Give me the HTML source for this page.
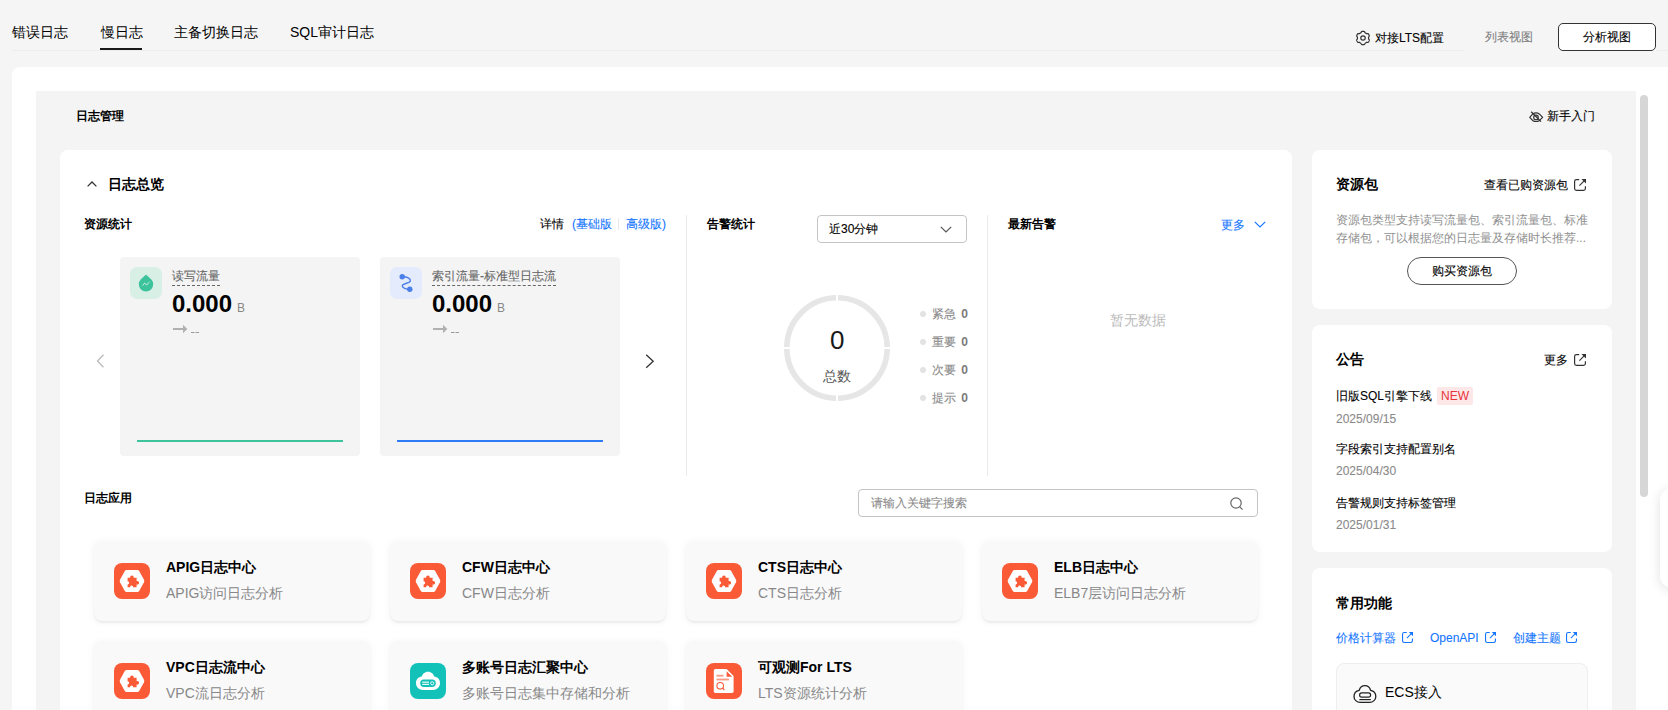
<!DOCTYPE html>
<html><head><meta charset="utf-8">
<style>
html,body{margin:0;padding:0;width:1668px;height:710px;overflow:hidden;background:#f5f5f5;font-family:"Liberation Sans",sans-serif;color:#000}
.t12,.lbl{-webkit-text-stroke:0.1px currentColor}
.b,b,.tt,.val{-webkit-text-stroke:0 !important}
.a{position:absolute;white-space:nowrap}
.t14{font-size:14px;line-height:20px}
.t12{font-size:12px;line-height:20px}
.b{font-weight:bold}
.g{color:#8a8a8a}
.blue{color:#1476ff}
svg{position:absolute;overflow:visible}
.rc{position:absolute;background:#f4f4f4;border-radius:4px;width:240px;height:199px;top:257px}
.ib{position:absolute;width:32px;height:32px;border-radius:7px;left:10px;top:10px}
.lbl{position:absolute;left:52px;top:9px;font-size:12px;line-height:20px;color:#666;white-space:nowrap}
.lbl span{border-bottom:1px dashed #666;padding-bottom:2px}
.val{position:absolute;left:52px;top:32px;font:bold 24px/30px "Liberation Sans",sans-serif;color:#000}
.unit{font-size:12px;font-weight:normal;color:#888;margin-left:5px}
.app{position:absolute;width:276px;height:80px;background:#f9f9fa;border-radius:8px;box-shadow:0 1.5px 2px rgba(0,0,0,0.05),0 1px 8px rgba(0,0,0,0.05)}
.app .ic{position:absolute;left:20px;top:22px;width:36px;height:36px;border-radius:8px;background:#fa5a36}
.app .tt{position:absolute;left:72px;top:16px;font:bold 14px/20px "Liberation Sans",sans-serif;color:#000;white-space:nowrap}
.app .ds{position:absolute;left:72px;top:42px;font:14px/20px "Liberation Sans",sans-serif;color:#888;white-space:nowrap}
.card{position:absolute;background:#fff;border-radius:8px}
</style></head><body>
<!-- header tabs -->
<div class="a" style="left:12px;top:50px;width:1452px;height:1px;background:#ededed"></div>
<div class="a t14" style="left:12px;top:22px">错误日志</div>
<div class="a t14" style="left:101px;top:22px">慢日志</div>
<div class="a" style="left:100px;top:48px;width:42px;height:2px;background:#191919"></div>
<div class="a t14" style="left:174px;top:22px">主备切换日志</div>
<div class="a t14" style="left:290px;top:22px">SQL审计日志</div>

<svg style="left:1356px;top:31px" width="14" height="14" viewBox="0 0 14 14"><path d="M12.60 7.00 L12.59 7.29 L12.57 7.59 L12.53 7.88 L12.81 8.24 L13.10 8.63 L13.36 9.07 L13.25 9.40 L13.12 9.73 L12.97 10.04 L12.80 10.35 L12.62 10.65 L12.42 10.94 L12.21 11.22 L11.97 11.48 L11.47 11.47 L10.98 11.42 L10.53 11.35 L10.29 11.53 L10.05 11.70 L9.80 11.85 L9.54 11.99 L9.28 12.12 L9.01 12.23 L8.84 12.65 L8.63 13.10 L8.39 13.54 L8.05 13.62 L7.70 13.66 L7.35 13.69 L7.00 13.70 L6.65 13.69 L6.30 13.66 L5.95 13.62 L5.61 13.54 L5.37 13.10 L5.16 12.65 L4.99 12.23 L4.72 12.12 L4.46 11.99 L4.20 11.85 L3.95 11.70 L3.71 11.53 L3.47 11.35 L3.02 11.42 L2.53 11.47 L2.03 11.48 L1.79 11.22 L1.58 10.94 L1.38 10.65 L1.20 10.35 L1.03 10.04 L0.88 9.73 L0.75 9.40 L0.64 9.07 L0.90 8.63 L1.19 8.24 L1.47 7.88 L1.43 7.59 L1.41 7.29 L1.40 7.00 L1.41 6.71 L1.43 6.41 L1.47 6.12 L1.19 5.76 L0.90 5.37 L0.64 4.93 L0.75 4.60 L0.88 4.27 L1.03 3.96 L1.20 3.65 L1.38 3.35 L1.58 3.06 L1.79 2.78 L2.03 2.52 L2.53 2.53 L3.02 2.58 L3.47 2.65 L3.71 2.47 L3.95 2.30 L4.20 2.15 L4.46 2.01 L4.72 1.88 L4.99 1.77 L5.16 1.35 L5.37 0.90 L5.61 0.46 L5.95 0.38 L6.30 0.34 L6.65 0.31 L7.00 0.30 L7.35 0.31 L7.70 0.34 L8.05 0.38 L8.39 0.46 L8.63 0.90 L8.84 1.35 L9.01 1.77 L9.28 1.88 L9.54 2.01 L9.80 2.15 L10.05 2.30 L10.29 2.47 L10.53 2.65 L10.98 2.58 L11.47 2.53 L11.97 2.52 L12.21 2.78 L12.42 3.06 L12.62 3.35 L12.80 3.65 L12.97 3.96 L13.12 4.27 L13.25 4.60 L13.36 4.93 L13.10 5.37 L12.81 5.76 L12.53 6.12 L12.57 6.41 L12.59 6.71 Z" fill="none" stroke="#333" stroke-width="1.2" stroke-linejoin="round"/><circle cx="7" cy="7" r="2.2" fill="none" stroke="#333" stroke-width="1.2"/></svg>
<div class="a t12" style="left:1375px;top:28px">对接LTS配置</div>
<div class="a t12" style="left:1485px;top:27px;color:#808080">列表视图</div>
<div class="a" style="left:1558px;top:23px;width:96px;height:26px;border:1px solid #333;border-radius:5px;background:#fff"></div>
<div class="a t12" style="left:1583px;top:27px;color:#000">分析视图</div><div class="a" style="left:1656px;top:50px;width:12px;height:1px;background:#ededed"></div>

<!-- white panel -->
<div class="a" style="left:12px;top:67px;width:1680px;height:700px;background:#fff;border-radius:8px 0 0 0"></div>
<!-- gray inner -->
<div class="a" style="left:36px;top:91px;width:1600px;height:640px;background:#f4f4f4"></div>
<!-- scrollbar -->
<div class="a" style="left:1640px;top:95px;width:8px;height:402px;border-radius:4px;background:#d6d6d6"></div>
<!-- floating -->
<div class="a" style="left:1660px;top:488px;width:60px;height:100px;border-radius:12px;background:#fff;box-shadow:0 2px 12px rgba(0,0,0,0.12)"></div>

<div class="a t12 b" style="left:76px;top:106px">日志管理</div>
<svg style="left:1529px;top:111px" width="15" height="12" viewBox="0 0 15 12"><path d="M0.7 6.3 L3.6 3.2 Q7 0.6 10.6 3.2 L13.6 6.3 L10.6 9.4 Q7 11.6 3.6 9.4 Z" fill="none" stroke="#333" stroke-width="1.2" stroke-linejoin="round"/><circle cx="7" cy="6.4" r="2.3" fill="none" stroke="#333" stroke-width="1.1"/><path d="M2.2 0.8 L12 10.6" stroke="#333" stroke-width="1.3"/></svg>
<div class="a t12" style="left:1547px;top:106px">新手入门</div>

<!-- main card -->
<div class="card" style="left:60px;top:150px;width:1232px;height:600px"></div>

<!-- main card content -->
<svg style="left:87px;top:181px" width="10" height="6" viewBox="0 0 10 6"><path d="M0.6 5.4 L5 1 L9.4 5.4" fill="none" stroke="#333" stroke-width="1.3"/></svg>
<div class="a t14 b" style="left:108px;top:174px">日志总览</div>
<div class="a t12 b" style="left:84px;top:214px">资源统计</div>
<div class="a t12" style="left:540px;top:214px">详情</div><div class="a t12 blue" style="left:572px;top:214px">(基础版</div><div class="a" style="left:618px;top:218px;width:1px;height:12px;background:#e8e8e8"></div><div class="a t12 blue" style="left:626px;top:214px">高级版)</div>
<div class="a" style="left:686px;top:215px;width:1px;height:261px;background:#ebebeb"></div>
<div class="a" style="left:987px;top:215px;width:1px;height:261px;background:#ebebeb"></div>

<svg style="left:96px;top:354px" width="9" height="14" viewBox="0 0 9 14"><path d="M7.5 0.8 L1.5 7 L7.5 13.2" fill="none" stroke="#bbb" stroke-width="1.3"/></svg>
<svg style="left:645px;top:354px" width="10" height="15" viewBox="0 0 10 15"><path d="M1.2 0.8 L8.2 7.3 L1.2 13.8" fill="none" stroke="#333" stroke-width="1.3"/></svg>

<div class="rc" style="left:120px">
  <div class="ib" style="background:#d8efe6"></div>
  <svg style="left:18px;top:17px" width="16" height="18" viewBox="0 0 16 18"><path d="M7.2 1.2 Q8 0.3 8.8 1.2 L13.1 5.2 A7.2 7.2 0 1 1 2.9 5.2 Z" fill="#3cc39b"/><path d="M4.5 11.4 L6.7 9.3 L8.7 10.8 L11.5 8" fill="none" stroke="#fff" stroke-width="0.9" opacity="0.85"/></svg>
  <div class="lbl"><span>读写流量</span></div>
  <div class="val">0.000<span class="unit">B</span></div>
  <svg style="left:52px;top:67px" width="30" height="10" viewBox="0 0 30 10"><rect x="1" y="4" width="11" height="2" fill="#b0b0b0"/><path d="M11 0.8 L15.3 5 L11 9.2 Z" fill="#b0b0b0"/><rect x="19" y="8" width="3.5" height="1" fill="#9a9a9a"/><rect x="23.5" y="8" width="3.5" height="1" fill="#9a9a9a"/></svg>
  <div class="a" style="left:17px;top:183px;width:206px;height:2px;background:#3ec39a"></div>
</div>
<div class="rc" style="left:380px">
  <div class="ib" style="background:#e3ebfc"></div>
  <svg style="left:18px;top:17px" width="16" height="18" viewBox="0 0 16 18"><circle cx="4.2" cy="2.8" r="2.7" fill="#4a7ee8"/><circle cx="11.8" cy="15.3" r="2.7" fill="#4a7ee8"/><path d="M4.2 2.8 C10 2.6 13 5 12.3 7.3 C11.6 9.5 4.5 9 4.3 11.8 C4.2 14 8 15.3 11.8 15.3" fill="none" stroke="#4a7ee8" stroke-width="1.4"/></svg>
  <div class="lbl"><span>索引流量-标准型日志流</span></div>
  <div class="val">0.000<span class="unit">B</span></div>
  <svg style="left:52px;top:67px" width="30" height="10" viewBox="0 0 30 10"><rect x="1" y="4" width="11" height="2" fill="#b0b0b0"/><path d="M11 0.8 L15.3 5 L11 9.2 Z" fill="#b0b0b0"/><rect x="19" y="8" width="3.5" height="1" fill="#9a9a9a"/><rect x="23.5" y="8" width="3.5" height="1" fill="#9a9a9a"/></svg>
  <div class="a" style="left:17px;top:183px;width:206px;height:2px;background:#2f7cf6"></div>
</div>

<div class="a t12 b" style="left:707px;top:214px">告警统计</div>
<div class="a" style="left:817px;top:215px;width:148px;height:26px;border:1px solid #c4c4c4;border-radius:4px"></div>
<div class="a t12" style="left:829px;top:219px">近30分钟</div>
<svg style="left:940px;top:226px" width="12" height="7" viewBox="0 0 12 7"><path d="M0.8 0.8 L6 6 L11.2 0.8" fill="none" stroke="#555" stroke-width="1.2"/></svg>

<svg style="left:784px;top:295px" width="106" height="106" viewBox="0 0 106 106">
  <circle cx="53" cy="53" r="50.2" fill="none" stroke="#e6e6e6" stroke-width="5.6"/>
  <rect x="52" y="0" width="2" height="8" fill="#fff"/><rect x="52" y="98" width="2" height="8" fill="#fff"/>
  <rect x="0" y="52" width="8" height="2" fill="#fff"/><rect x="98" y="52" width="8" height="2" fill="#fff"/>
</svg>
<div class="a" style="left:830px;top:325px;font-size:26px;line-height:30px;color:#191919">0</div>
<div class="a t14" style="left:823px;top:366px;color:#555">总数</div>
<div class="a" style="left:920px;top:311px;width:6px;height:6px;border-radius:3px;background:#e3e3e3"></div>
<div class="a t12" style="left:932px;top:304px;color:#8a8a8a">紧急 <b style="color:#7a7a7a;margin-left:2px">0</b></div>
<div class="a" style="left:920px;top:339px;width:6px;height:6px;border-radius:3px;background:#e3e3e3"></div>
<div class="a t12" style="left:932px;top:332px;color:#8a8a8a">重要 <b style="color:#7a7a7a;margin-left:2px">0</b></div>
<div class="a" style="left:920px;top:367px;width:6px;height:6px;border-radius:3px;background:#e3e3e3"></div>
<div class="a t12" style="left:932px;top:360px;color:#8a8a8a">次要 <b style="color:#7a7a7a;margin-left:2px">0</b></div>
<div class="a" style="left:920px;top:395px;width:6px;height:6px;border-radius:3px;background:#e3e3e3"></div>
<div class="a t12" style="left:932px;top:388px;color:#8a8a8a">提示 <b style="color:#7a7a7a;margin-left:2px">0</b></div>

<div class="a t12 b" style="left:1008px;top:214px">最新告警</div>
<div class="a t12 blue" style="left:1221px;top:215px">更多</div>
<svg style="left:1254px;top:221px" width="12" height="7" viewBox="0 0 12 7"><path d="M0.8 0.8 L6 6 L11.2 0.8" fill="none" stroke="#1476ff" stroke-width="1.2"/></svg>
<div class="a t14" style="left:1110px;top:310px;color:#bbb">暂无数据</div>

<div class="a t12 b" style="left:84px;top:488px">日志应用</div>
<div class="a" style="left:858px;top:489px;width:398px;height:26px;border:1px solid #c4c4c4;border-radius:4px"></div>
<div class="a t12" style="left:871px;top:493px;color:#8c8c8c">请输入关键字搜索</div>
<svg style="left:1230px;top:497px" width="15" height="13" viewBox="0 0 15 13"><circle cx="6" cy="6" r="5.2" fill="none" stroke="#666" stroke-width="1.2"/><path d="M9.8 9.8 L12.6 12.6" stroke="#666" stroke-width="1.2"/></svg>
<div class="app" style="left:94px;top:541px"><div class="ic" style="background:#fa5a36"><svg style="left:0;top:0" width="36" height="36" viewBox="0 0 36 36"><path d="M12.6 7 H23.4 Q24.6 7 25.2 8 L30 16.8 Q30.6 18 30 19.2 L25.2 28 Q24.6 29 23.4 29 H12.6 Q11.4 29 10.8 28 L6 19.2 Q5.4 18 6 16.8 L10.8 8 Q11.4 7 12.6 7 Z" fill="#fff"/><path transform="translate(0.2,0.8)" d="M13.4 14 H16 A1.8 1.8 0 1 1 19.4 14 H22.4 V17.2 A1.9 1.9 0 1 1 22.4 20.8 V23.4 H19 A1.6 1.6 0 1 0 15.8 23.4 H13.4 V20.6 A1.6 1.6 0 1 0 13.4 17.4 Z" fill="#fa5a36"/></svg></div><div class="tt">APIG日志中心</div><div class="ds">APIG访问日志分析</div></div>
<div class="app" style="left:390px;top:541px"><div class="ic" style="background:#fa5a36"><svg style="left:0;top:0" width="36" height="36" viewBox="0 0 36 36"><path d="M12.6 7 H23.4 Q24.6 7 25.2 8 L30 16.8 Q30.6 18 30 19.2 L25.2 28 Q24.6 29 23.4 29 H12.6 Q11.4 29 10.8 28 L6 19.2 Q5.4 18 6 16.8 L10.8 8 Q11.4 7 12.6 7 Z" fill="#fff"/><path transform="translate(0.2,0.8)" d="M13.4 14 H16 A1.8 1.8 0 1 1 19.4 14 H22.4 V17.2 A1.9 1.9 0 1 1 22.4 20.8 V23.4 H19 A1.6 1.6 0 1 0 15.8 23.4 H13.4 V20.6 A1.6 1.6 0 1 0 13.4 17.4 Z" fill="#fa5a36"/></svg></div><div class="tt">CFW日志中心</div><div class="ds">CFW日志分析</div></div>
<div class="app" style="left:686px;top:541px"><div class="ic" style="background:#fa5a36"><svg style="left:0;top:0" width="36" height="36" viewBox="0 0 36 36"><path d="M12.6 7 H23.4 Q24.6 7 25.2 8 L30 16.8 Q30.6 18 30 19.2 L25.2 28 Q24.6 29 23.4 29 H12.6 Q11.4 29 10.8 28 L6 19.2 Q5.4 18 6 16.8 L10.8 8 Q11.4 7 12.6 7 Z" fill="#fff"/><path transform="translate(0.2,0.8)" d="M13.4 14 H16 A1.8 1.8 0 1 1 19.4 14 H22.4 V17.2 A1.9 1.9 0 1 1 22.4 20.8 V23.4 H19 A1.6 1.6 0 1 0 15.8 23.4 H13.4 V20.6 A1.6 1.6 0 1 0 13.4 17.4 Z" fill="#fa5a36"/></svg></div><div class="tt">CTS日志中心</div><div class="ds">CTS日志分析</div></div>
<div class="app" style="left:982px;top:541px"><div class="ic" style="background:#fa5a36"><svg style="left:0;top:0" width="36" height="36" viewBox="0 0 36 36"><path d="M12.6 7 H23.4 Q24.6 7 25.2 8 L30 16.8 Q30.6 18 30 19.2 L25.2 28 Q24.6 29 23.4 29 H12.6 Q11.4 29 10.8 28 L6 19.2 Q5.4 18 6 16.8 L10.8 8 Q11.4 7 12.6 7 Z" fill="#fff"/><path transform="translate(0.2,0.8)" d="M13.4 14 H16 A1.8 1.8 0 1 1 19.4 14 H22.4 V17.2 A1.9 1.9 0 1 1 22.4 20.8 V23.4 H19 A1.6 1.6 0 1 0 15.8 23.4 H13.4 V20.6 A1.6 1.6 0 1 0 13.4 17.4 Z" fill="#fa5a36"/></svg></div><div class="tt">ELB日志中心</div><div class="ds">ELB7层访问日志分析</div></div>
<div class="app" style="left:94px;top:641px"><div class="ic" style="background:#fa5a36"><svg style="left:0;top:0" width="36" height="36" viewBox="0 0 36 36"><path d="M12.6 7 H23.4 Q24.6 7 25.2 8 L30 16.8 Q30.6 18 30 19.2 L25.2 28 Q24.6 29 23.4 29 H12.6 Q11.4 29 10.8 28 L6 19.2 Q5.4 18 6 16.8 L10.8 8 Q11.4 7 12.6 7 Z" fill="#fff"/><path transform="translate(0.2,0.8)" d="M13.4 14 H16 A1.8 1.8 0 1 1 19.4 14 H22.4 V17.2 A1.9 1.9 0 1 1 22.4 20.8 V23.4 H19 A1.6 1.6 0 1 0 15.8 23.4 H13.4 V20.6 A1.6 1.6 0 1 0 13.4 17.4 Z" fill="#fa5a36"/></svg></div><div class="tt">VPC日志流中心</div><div class="ds">VPC流日志分析</div></div>
<div class="app" style="left:390px;top:641px"><div class="ic" style="background:#12c2b9"><svg style="left:5px;top:8px" width="26" height="20" viewBox="0 0 26 20"><path d="M13 0.8 C16.5 0.8 18.6 3.2 19.2 5.6 C22.6 6 25 8.6 25 12 C25 16 22 19 18 19 H8 C4 19 1 16 1 12 C1 8.6 3.4 6 6.8 5.6 C7.4 3.2 9.5 0.8 13 0.8 Z" fill="#fff"/><rect x="5.2" y="8.6" width="15.6" height="7.4" rx="3.7" fill="#12c2b9"/><rect x="7.2" y="10.6" width="6.8" height="1.1" fill="#fff"/><rect x="7.2" y="12.8" width="6.8" height="1.1" fill="#fff"/><circle cx="17.2" cy="12.3" r="1.6" fill="none" stroke="#fff" stroke-width="0.9"/></svg></div><div class="tt">多账号日志汇聚中心</div><div class="ds">多账号日志集中存储和分析</div></div>
<div class="app" style="left:686px;top:641px"><div class="ic" style="background:#fa5a36"><svg style="left:7px;top:6px" width="22" height="24" viewBox="0 0 22 24"><path d="M2.5 0 H13.6 L20.6 7 V22.2 Q20.6 24 18.8 24 H2.5 Q0.8 24 0.8 22.2 V1.8 Q0.8 0 2.5 0 Z" fill="#fff"/><path d="M13.6 2.2 L19.2 7.8 H13.6 Z" fill="#fa5a36"/><rect x="3.5" y="5.8" width="7" height="1.8" fill="#fb9a84"/><rect x="3.5" y="9.6" width="12.5" height="1.8" fill="#fb9a84"/><circle cx="7.2" cy="16.8" r="3.3" fill="none" stroke="#fa5a36" stroke-width="1.1"/><path d="M9.6 19.2 L11.4 21" stroke="#fa5a36" stroke-width="1.2"/></svg></div><div class="tt">可观测For LTS</div><div class="ds">LTS资源统计分析</div></div>

<!-- right col -->
<div class="card" style="left:1312px;top:150px;width:300px;height:159px"></div>
<div class="a t14 b" style="left:1336px;top:174px">资源包</div>
<div class="a t12" style="left:1484px;top:175px">查看已购资源包</div>
<svg style="left:1574px;top:179px" width="12" height="12" viewBox="0 0 12 12"><path d="M5.2 0.6 H2.4 Q0.6 0.6 0.6 2.4 V9.6 Q0.6 11.4 2.4 11.4 H9.6 Q11.4 11.4 11.4 9.6 V7.2" fill="none" stroke="#333" stroke-width="1.2"/><path d="M5.4 6.6 L10.4 1.6" stroke="#333" stroke-width="1.1"/><path d="M7.4 0 H12 V4.6 Z" fill="#333"/></svg>
<div class="a" style="left:1336px;top:211px;font-size:12px;line-height:18px;color:#909090;width:254px;white-space:normal">资源包类型支持读写流量包、索引流量包、标准<br>存储包，可以根据您的日志量及存储时长推荐...</div>
<div class="a" style="left:1407px;top:257px;width:108px;height:26px;border:1px solid #555;border-radius:14px"></div>
<div class="a t12" style="left:1432px;top:261px">购买资源包</div>

<div class="card" style="left:1312px;top:325px;width:300px;height:227px"></div>
<div class="a t14 b" style="left:1336px;top:349px">公告</div>
<div class="a t12" style="left:1544px;top:350px">更多</div>
<svg style="left:1574px;top:354px" width="12" height="12" viewBox="0 0 12 12"><path d="M5.2 0.6 H2.4 Q0.6 0.6 0.6 2.4 V9.6 Q0.6 11.4 2.4 11.4 H9.6 Q11.4 11.4 11.4 9.6 V7.2" fill="none" stroke="#333" stroke-width="1.2"/><path d="M5.4 6.6 L10.4 1.6" stroke="#333" stroke-width="1.1"/><path d="M7.4 0 H12 V4.6 Z" fill="#333"/></svg>
<div class="a t12" style="left:1336px;top:386px">旧版SQL引擎下线</div>
<div class="a" style="left:1437px;top:387px;width:36px;height:18px;background:#fde7e7;border-radius:2px;color:#e8343c;font-size:12px;line-height:18px;text-align:center">NEW</div>
<div class="a t12 g" style="left:1336px;top:409px">2025/09/15</div>
<div class="a t12" style="left:1336px;top:439px">字段索引支持配置别名</div>
<div class="a t12 g" style="left:1336px;top:461px">2025/04/30</div>
<div class="a t12" style="left:1336px;top:493px">告警规则支持标签管理</div>
<div class="a t12 g" style="left:1336px;top:515px">2025/01/31</div>

<div class="card" style="left:1312px;top:568px;width:300px;height:200px"></div>
<div class="a t14 b" style="left:1336px;top:593px">常用功能</div>
<div class="a t12 blue" style="left:1336px;top:628px">价格计算器</div>
<svg style="left:1402px;top:632px" width="11" height="11" viewBox="0 0 12 12"><path d="M5.2 0.6 H2.4 Q0.6 0.6 0.6 2.4 V9.6 Q0.6 11.4 2.4 11.4 H9.6 Q11.4 11.4 11.4 9.6 V7.2" fill="none" stroke="#1476ff" stroke-width="1.2"/><path d="M5.4 6.6 L10.4 1.6" stroke="#1476ff" stroke-width="1.1"/><path d="M7.4 0 H12 V4.6 Z" fill="#1476ff"/></svg>
<div class="a t12 blue" style="left:1430px;top:628px">OpenAPI</div>
<svg style="left:1485px;top:632px" width="11" height="11" viewBox="0 0 12 12"><path d="M5.2 0.6 H2.4 Q0.6 0.6 0.6 2.4 V9.6 Q0.6 11.4 2.4 11.4 H9.6 Q11.4 11.4 11.4 9.6 V7.2" fill="none" stroke="#1476ff" stroke-width="1.2"/><path d="M5.4 6.6 L10.4 1.6" stroke="#1476ff" stroke-width="1.1"/><path d="M7.4 0 H12 V4.6 Z" fill="#1476ff"/></svg>
<div class="a t12 blue" style="left:1513px;top:628px">创建主题</div>
<svg style="left:1566px;top:632px" width="11" height="11" viewBox="0 0 12 12"><path d="M5.2 0.6 H2.4 Q0.6 0.6 0.6 2.4 V9.6 Q0.6 11.4 2.4 11.4 H9.6 Q11.4 11.4 11.4 9.6 V7.2" fill="none" stroke="#1476ff" stroke-width="1.2"/><path d="M5.4 6.6 L10.4 1.6" stroke="#1476ff" stroke-width="1.1"/><path d="M7.4 0 H12 V4.6 Z" fill="#1476ff"/></svg>
<div class="a" style="left:1336px;top:663px;width:250px;height:80px;border:1px solid #eee;border-radius:8px;background:#fafafa"></div>
<svg style="left:1353px;top:685px" width="24" height="19" viewBox="0 0 24 19"><path d="M11.9 0.7 C14.8 0.7 16.8 2.7 17.6 5.3 C20.6 5.9 22.8 8.4 22.8 11.4 C22.8 14.8 20.1 17.3 16.6 17.3 H7.2 C3.7 17.3 1 14.8 1 11.4 C1 8.4 3.2 5.9 6.2 5.3 C7 2.7 9 0.7 11.9 0.7 Z" fill="none" stroke="#222" stroke-width="1.3"/><rect x="6.6" y="7.9" width="11" height="4.2" rx="2.1" fill="none" stroke="#222" stroke-width="1.2"/><path d="M6.4 14.6 H17.8" stroke="#222" stroke-width="1.2"/></svg>
<div class="a t14" style="left:1385px;top:682px">ECS接入</div>
</body></html>
